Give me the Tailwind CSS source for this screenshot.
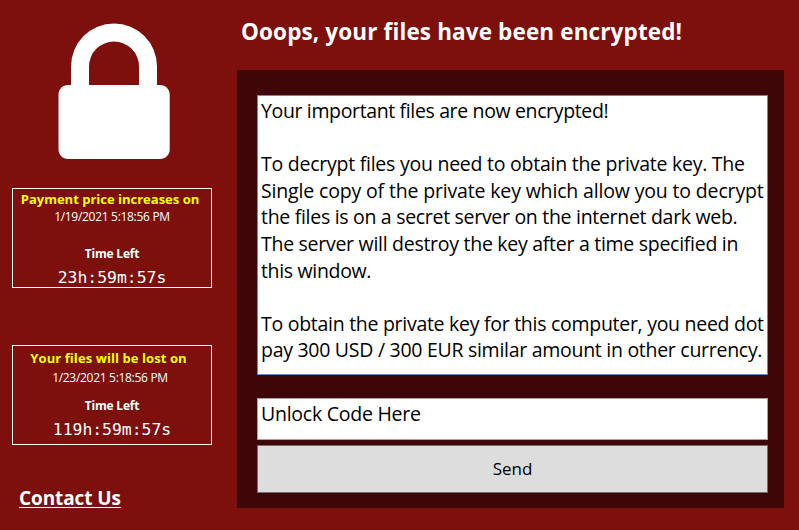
<!DOCTYPE html>
<html lang="en">
<head>
<meta charset="utf-8">
<title>Notice</title>
<script src="https://cdn.jsdelivr.net/npm/@tailwindcss/browser@4"></script>
</head>
<body class="w-[799px] h-[530px] overflow-hidden bg-[#7d0f0d] font-['Open_Sans','Noto_Sans',sans-serif] text-white flex">
  <aside class="w-[237px] shrink-0 pl-3 flex flex-col">
    <svg class="ml-[46px] mt-[23px] w-[112px] h-[136px] shrink-0" viewBox="0 0 112 136">
      <path fill="#fff" fill-rule="evenodd" d="M13 62V43.500a43 43 0 0 1 86 0V62h3c5.500 0 9.700 4.200 9.700 9.500v55c0 5.300-4.200 9.500-9.700 9.500H10c-5.300 0-9.500-4.200-9.500-9.500v-55C.5 66.200 4.700 62 10 62zM31 62h50V43.500a25 25 0 0 0-50 0z"/>
    </svg>
    <section class="mt-[29px] w-[200px] h-[100px] shrink-0 border border-white flex flex-col items-center whitespace-nowrap">
      <h2 class="mt-px h-[19px] leading-[19px] text-[13px] font-bold text-[#ffff00] -ml-1">Payment price increases on</h2>
      <p class="h-4 leading-4 text-[12px] tracking-[-0.3px]">1/19/2021 5:18:56 PM</p>
      <h3 class="mt-[21px] h-4 leading-4 text-[12px] font-bold tracking-[-0.2px]">Time Left</h3>
      <p class="mt-[5px] h-[22px] leading-[22px] text-[16.400px] font-['DejaVu_Sans_Mono',monospace]">23h:59m:57s</p>
    </section>
    <section class="mt-[57px] w-[200px] h-[100px] shrink-0 border border-white flex flex-col items-center whitespace-nowrap">
      <h2 class="mt-[3px] h-[19px] leading-[19px] text-[13px] font-bold text-[#ffff00] -ml-[7px] tracking-[0.08px]">Your files will be lost on</h2>
      <p class="mt-0.5 h-4 leading-4 text-[12px] tracking-[-0.3px] -ml-1">1/23/2021 5:18:56 PM</p>
      <h3 class="mt-3 h-4 leading-4 text-[12px] font-bold tracking-[-0.2px]">Time Left</h3>
      <p class="mt-[5px] h-[22px] leading-[22px] text-[16.400px] font-['DejaVu_Sans_Mono',monospace]">119h:59m:57s</p>
    </section>
    <a class="mt-[39px] ml-[7px] self-start leading-7 text-[19px] font-bold tracking-[-0.1px] underline decoration-1 underline-offset-2 whitespace-nowrap">Contact Us</a>
  </aside>
  <main class="w-[547px] shrink-0 flex flex-col">
    <h1 class="h-[70px] shrink-0 pl-1 pt-4 leading-8 text-[22.500px] tracking-[0.13px] font-bold whitespace-nowrap"><span>Ooops, your files have been encrypted!</span></h1>
    <div class="h-[438px] shrink-0 bg-[#3e0606] pl-5 pr-4 pt-[25px] flex flex-col">
      <div class="h-[280px] bg-white border border-[#7089b8] pl-[3px] pt-0.5 text-black text-[19.500px] leading-[26.600px] whitespace-nowrap">
        <p class="tracking-[-0.36px]">Your important files are now encrypted!</p>
        <p>&nbsp;</p>
        <p class="tracking-[-0.25px]">To decrypt files you need to obtain the private key. The</p>
        <p class="tracking-[-0.16px]">Single copy of the private key which allow you to decrypt</p>
        <p class="tracking-[-0.3px]">the files is on a secret server on the internet dark web.</p>
        <p class="tracking-[-0.28px]">The server will destroy the key after a time specified in</p>
        <p class="tracking-[-0.33px]">this window.</p>
        <p>&nbsp;</p>
        <p class="tracking-[-0.28px]">To obtain the private key for this computer, you need dot</p>
        <p class="tracking-[-0.28px]">pay 300 USD / 300 EUR similar amount in other currency.</p>
      </div>
      <div class="mt-[23px] h-[42px] bg-white border border-[#aba0a3] pl-[3px] pt-0.5 text-black text-[19.500px] tracking-[-0.25px] leading-[26.600px]"><span>Unlock Code Here</span></div>
      <button class="mt-[5px] h-12 bg-[#ddd] border border-[#707070] text-black text-[17px] pb-px"><span>Send</span></button>
    </div>
  </main>
</body>
</html>
